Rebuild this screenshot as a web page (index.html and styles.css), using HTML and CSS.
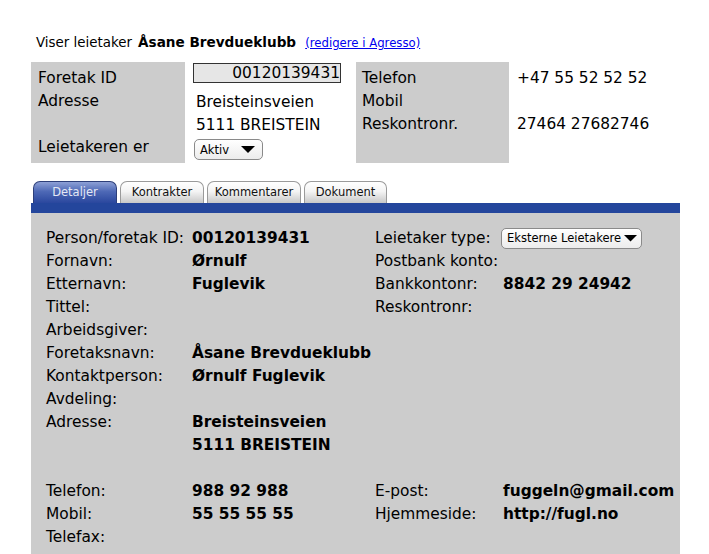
FILE: index.html
```html
<!DOCTYPE html>
<html lang="no">
<head>
<meta charset="utf-8">
<title>Viser leietaker</title>
<link rel="stylesheet" href="styles.css">
</head>
<body>
<div class="page">
  <div class="header">
    <span class="h-label">Viser leietaker</span>
    <span class="h-name">Åsane Brevdueklubb</span>
    <a class="h-link" href="#">(redigere i Agresso)</a>
  </div>

  <div class="summary">
    <div class="sum-labels">
      <div class="row">Foretak ID</div>
      <div class="row">Adresse</div>
      <div class="row"></div>
      <div class="row">Leietakeren er</div>
    </div>
    <div class="sum-values">
      <div class="idbox">00120139431</div>
      <div class="row addr addr1">Breisteinsveien</div>
      <div class="row addr">5111 BREISTEIN</div>
      <div class="select sel-aktiv">
        <span>Aktiv</span>
        <svg class="caret" width="14" height="8" viewBox="0 0 14 8"><path d="M0 0H14L7 7Z" fill="#000"/></svg>
      </div>
    </div>
    <div class="sum-labels sum-labels2">
      <div class="row">Telefon</div>
      <div class="row">Mobil</div>
      <div class="row">Reskontronr.</div>
    </div>
    <div class="sum-values sum-values2">
      <div class="row">+47 55 52 52 52</div>
      <div class="row"></div>
      <div class="row">27464 27682746</div>
    </div>
  </div>

  <div class="tabs">
    <div class="tab active t1">Detaljer</div>
    <div class="tab t2">Kontrakter</div>
    <div class="tab t3">Kommentarer</div>
    <div class="tab t4">Dokument</div>
  </div>
  <div class="tabbar"></div>

  <div class="panel">
    <div class="lbl">Person/foretak ID:</div><div class="val">00120139431</div>
    <div class="lbl">Leietaker type:</div>
    <div class="cell"><div class="select sel-type"><span>Eksterne Leietakere</span><svg class="caret" width="13" height="7" viewBox="0 0 13 7"><path d="M0 0H13L6.5 6.5Z" fill="#000"/></svg></div></div>

    <div class="lbl">Fornavn:</div><div class="val">Ørnulf</div>
    <div class="lbl">Postbank konto:</div><div class="val"></div>

    <div class="lbl">Etternavn:</div><div class="val">Fuglevik</div>
    <div class="lbl">Bankkontonr:</div><div class="val">8842 29 24942</div>

    <div class="lbl">Tittel:</div><div class="val"></div>
    <div class="lbl">Reskontronr:</div><div class="val"></div>

    <div class="lbl">Arbeidsgiver:</div><div class="val"></div><div></div><div></div>
    <div class="lbl">Foretaksnavn:</div><div class="val">Åsane Brevdueklubb</div><div></div><div></div>
    <div class="lbl">Kontaktperson:</div><div class="val">Ørnulf Fuglevik</div><div></div><div></div>
    <div class="lbl">Avdeling:</div><div class="val"></div><div></div><div></div>
    <div class="lbl">Adresse:</div><div class="val">Breisteinsveien</div><div></div><div></div>
    <div class="lbl"></div><div class="val">5111 BREISTEIN</div><div></div><div></div>
    <div class="lbl"></div><div class="val"></div><div></div><div></div>

    <div class="lbl">Telefon:</div><div class="val">988 92 988</div>
    <div class="lbl">E-post:</div><div class="val">fuggeln@gmail.com</div>

    <div class="lbl">Mobil:</div><div class="val">55 55 55 55</div>
    <div class="lbl">Hjemmeside:</div><div class="val">http://fugl.no</div>

    <div class="lbl">Telefax:</div><div class="val"></div><div></div><div></div>
  </div>
</div>
</body>
</html>
```

FILE: styles.css
```css
html, body {
  margin: 0;
  padding: 0;
  background: #ffffff;
}
body {
  font-family: "DejaVu Sans", "Liberation Sans", sans-serif;
  color: #000;
}
.page {
  padding: 31px 29px 0 31px;
}

.header {
  height: 22px;
  line-height: 22px;
  padding-left: 5px;
  white-space: nowrap;
}
.h-label {
  font-size: 13.4px;
}
.h-name {
  font-size: 13.6px;
  font-weight: bold;
  margin-left: 1px;
}
.h-link {
  font-size: 11.7px;
  color: #0000ee;
  text-decoration: underline;
  margin-left: 4px;
}

.summary {
  display: flex;
  margin-top: 9px;
  height: 101px;
  font-size: 15.4px;
}
.row {
  height: 23px;
  line-height: 23px;
  white-space: nowrap;
}
.sum-labels {
  width: 147px;
  background: #cccccc;
  padding: 5px 0 0 7px;
}
.sum-values {
  width: 163px;
  padding-left: 8px;
}
.sum-labels2 {
  width: 147px;
  padding-left: 6px;
}
.sum-values2 {
  padding-left: 8px;
  padding-top: 5px;
}
.idbox {
  margin-top: 1px;
  width: 146px;
  height: 18px;
  line-height: 18px;
  border: 1px solid #333;
  background: #e6e6e6;
  text-align: right;
}
.addr {
  padding-left: 3px;
}
.addr1 {
  margin-top: 8px;
}

.select {
  display: flex;
  align-items: center;
  justify-content: space-between;
  box-sizing: border-box;
  height: 21px;
  border: 1px solid #8a8a8a;
  border-radius: 5px;
  background: linear-gradient(#ffffff, #ececec);
  font-size: 11.5px;
  padding: 0 5px 0 5px;
  white-space: nowrap;
}
.sel-aktiv {
  margin-top: 2px;
  margin-left: 1px;
  width: 69px;
}
.sel-aktiv .caret {
  margin-right: 2px;
}
.sel-type {
  width: 141px;
  padding: 0 4px 0 5px;
  margin-left: -2px;
}

.tabs {
  display: flex;
  gap: 3px;
  margin-top: 18px;
  padding-left: 2px;
  height: 22px;
  align-items: flex-end;
}
.tab {
  box-sizing: border-box;
  height: 22px;
  border: 1px solid #9a9a9a;
  border-bottom: none;
  border-radius: 7px 7px 0 0;
  background: linear-gradient(#ffffff 0%, #f4f4f4 45%, #c8c8c8 100%);
  font-size: 11.5px;
  text-align: center;
  line-height: 20px;
  color: #111;
}
.tab.active {
  border-color: #2d3f7a;
  background: linear-gradient(#8da0d6 0%, #4e69b6 45%, #2a479e 100%);
  color: #e4e8f4;
}
.t1 { width: 84px; }
.t2 { width: 84px; }
.t3 { width: 94px; }
.t4 { width: 83px; }

.tabbar {
  height: 10px;
  background: #24469c;
}

.panel {
  background: #cccccc;
  padding: 14px 15px 12px 15px;
  display: grid;
  grid-template-columns: 146px 183px 128px auto;
  grid-auto-rows: 23px;
  font-size: 15.4px;
  line-height: 23px;
  white-space: nowrap;
}
.val {
  font-weight: bold;
}
.cell {
  display: flex;
  align-items: center;
}
```
